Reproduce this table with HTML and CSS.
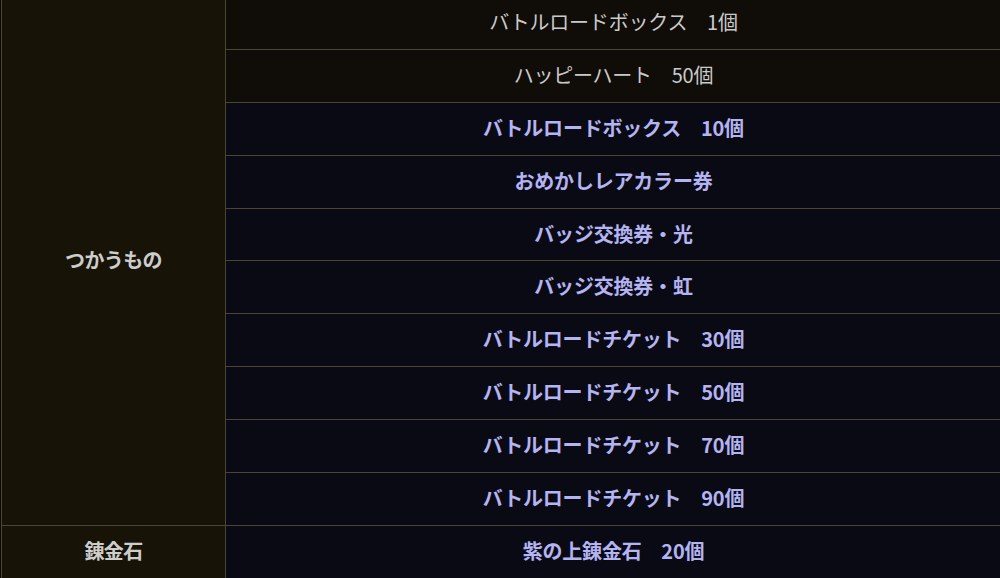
FILE: index.html
```html
<!DOCTYPE html>
<html lang="ja">
<head>
<meta charset="utf-8">
<title>報酬一覧</title>
<link rel="stylesheet" href="styles.css">
</head>
<body>
<table class="rewards">
  <tbody>
    <tr>
      <th class="cat" rowspan="10">つかうもの</th>
      <td class="item plain">バトルロードボックス　1個</td>
    </tr>
    <tr><td class="item plain">ハッピーハート　50個</td></tr>
    <tr><td class="item rare">バトルロードボックス　10個</td></tr>
    <tr><td class="item rare">おめかしレアカラー券</td></tr>
    <tr><td class="item rare">バッジ交換券・光</td></tr>
    <tr><td class="item rare">バッジ交換券・虹</td></tr>
    <tr><td class="item rare">バトルロードチケット　30個</td></tr>
    <tr><td class="item rare">バトルロードチケット　50個</td></tr>
    <tr><td class="item rare">バトルロードチケット　70個</td></tr>
    <tr><td class="item rare">バトルロードチケット　90個</td></tr>
    <tr>
      <th class="cat">錬金石</th>
      <td class="item rare">紫の上錬金石　20個</td>
    </tr>
  </tbody>
</table>
</body>
</html>
```

FILE: styles.css
```css
html, body {
  margin: 0;
  padding: 0;
  background: #0c0a08;
  overflow: hidden;
}
body {
  font-family: "Noto Sans CJK JP", "Noto Sans", sans-serif;
}
.rewards {
  margin: -4px 0 0 1px;
  width: 1001px;
  border-collapse: collapse;
  table-layout: fixed;
}
.rewards tr {
  height: 52.9px;
}
.cat, .item {
  border: 1px solid #4b4634;
  text-align: center;
  vertical-align: middle;
  padding: 0 0 3px 0;
  font-size: 20px;
  letter-spacing: -0.2px;
}
.cat {
  width: 223px;
  background: #181307;
  color: #cdcdcd;
  font-weight: bold;
  letter-spacing: -0.6px;
}
.item.plain {
  background: #100c08;
  color: #cacaca;
  font-weight: normal;
}
.item.rare {
  background: #0a0a14;
  color: #b4b4f2;
  font-weight: bold;
}
```
